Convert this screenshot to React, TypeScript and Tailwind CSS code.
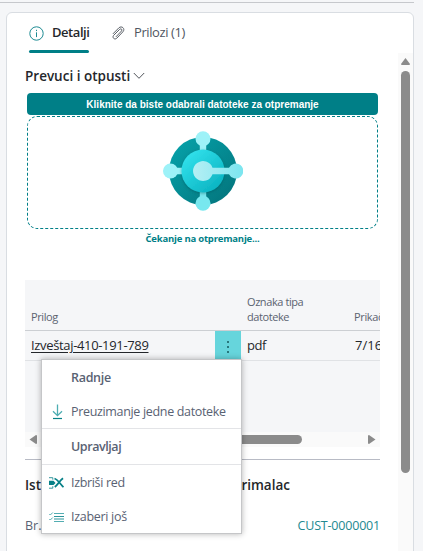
import type { ReactNode } from "react";

const ui = "font-['Open_Sans','Noto_Sans',sans-serif]";

function InfoIcon() {
  return (
    <svg className="shrink-0" width="15" height="15" viewBox="0 0 15 15" fill="none" stroke="#1c8a92">
      <circle cx="7.5" cy="7.5" r="6.7" />
      <path d="M7.5 6.3v4.8M7.5 3.8v1.3" />
    </svg>
  );
}

function ClipIcon() {
  return (
    <svg className="shrink-0" width="13" height="14" viewBox="0 0 13 14" fill="none" stroke="#5b6068" strokeWidth="1" strokeLinecap="round">
      <path d="M1.2 7.6 6.8 1.9C9.8-.8 13.6 2.8 10.9 5.8L4.7 12.3C2.5 14.2-.2 11.5 1.6 9.4L7.7 3.3C9.2 2.1 10.6 3.6 9.6 4.9L4.2 10.6" />
    </svg>
  );
}

function Logo() {
  return (
    <svg width="80" height="82" viewBox="0 0 80 82">
      <defs>
        <linearGradient id="ring" x1="0" y1="0" x2="1" y2="1">
          <stop offset="0" stopColor="#06a5ad" />
          <stop offset="1" stopColor="#037179" />
        </linearGradient>
        <linearGradient id="disc" x1="0.15" y1="0.1" x2="0.85" y2="0.9">
          <stop offset="0" stopColor="#31e0eb" />
          <stop offset="1" stopColor="#0bb4c2" />
        </linearGradient>
        <linearGradient id="core" x1="0" y1="0" x2="1" y2="0">
          <stop offset="0" stopColor="#b5eff4" />
          <stop offset="1" stopColor="#7be5ef" />
        </linearGradient>
        <filter id="soft" x="-20%" y="-20%" width="140%" height="140%">
          <feDropShadow dx="0" dy="1" stdDeviation="1.5" floodColor="#004b50" floodOpacity="0.45" />
        </filter>
      </defs>
      <circle cx="40" cy="41" r="34" fill="url(#ring)" />
      <g fill="#9df2f8">
        <path d="M36.8 8h6.4v14h-6.4zM8 37.800h14v6.400H8z" />
        <circle cx="40" cy="8.800" r="7.500" />
        <circle cx="7.500" cy="41" r="7.500" />
      </g>
      <g fill="#78e8ef">
        <path d="M36.800 60h6.400v14h-6.400z" />
        <circle cx="40" cy="73.200" r="7.500" />
      </g>
      <circle cx="40" cy="41" r="21.500" fill="url(#disc)" filter="url(#soft)" />
      <path d="M49.500 44.200H66a7.500 7.500 0 1 0 0-6.400H49.500A10 10 0 1 0 49.500 44.200Z" fill="url(#core)" />
    </svg>
  );
}

function DownloadIcon() {
  return (
    <svg width="11" height="16" viewBox="0 0 11 16" fill="none">
      <path d="M5.500 .5v11M1 7.200l4.500 4.500L10 7.200" stroke="#4dadb2" strokeWidth="1.300" />
      <path d="M1 14.500h9" stroke="#078087" strokeWidth="1.200" />
    </svg>
  );
}

function DeleteRowIcon() {
  return (
    <svg width="15" height="12" viewBox="0 0 15 12" fill="none">
      <path d="M0 .7h3.800v2M0 11.200h3.800v-2" stroke="#35979d" />
      <path d="M0 3.800h4.500L6.500 6 4.500 8H0z" fill="#078087" />
      <path d="M5.500 1.500c3 1 5.500 5 9 8.700M5.800 10C8.800 7.500 10.500 4 14 1.300" stroke="#078087" strokeWidth="1.800" />
    </svg>
  );
}

function ChecklistIcon() {
  return (
    <svg width="15" height="11" viewBox="0 0 15 11" fill="none" stroke="#53adb2">
      <path d="M5 1.500h10M5 9.500h10" />
      <path d="M5 4.500h10M5 7h10" stroke="#2d959b" />
      <path d="m.3 2 1 1L3.800.5M.3 7l1 1 2.500-2.500" />
    </svg>
  );
}

function MenuItem({ icon, children }: { icon: ReactNode; children: ReactNode }) {
  return (
    <div className="flex h-[34px] items-center text-[12.5px] text-[#596273]">
      <div className="flex w-[29px] items-center pl-[7px]">{icon}</div>
      <span className="whitespace-nowrap">{children}</span>
    </div>
  );
}

function ContextMenu() {
  return (
    <div className="absolute left-[41px] top-[359px] h-[175px] w-[201px] border border-[#c5c6c8] bg-white shadow-[0_0_6px_rgba(0,0,0,0.3)]">
      <div className="flex h-[35px] items-center pl-[29px] pt-[1px] text-[12.5px] font-semibold text-[#596273]"><span className="tracking-[-0.3px]">Radnje</span></div>
      <MenuItem icon={<span className="ml-[3px]"><DownloadIcon /></span>}><span className="tracking-[-0.33px]">Preuzimanje jedne datoteke</span></MenuItem>
      <div className="mt-[-1px] flex h-[37px] items-center border-y border-[#e3e4e7] pl-[29px] pt-[1px] text-[12.5px] font-semibold text-[#596273]"><span className="tracking-[-0.43px]">Upravljaj</span></div>
      <div className="pt-[1px]">
        <MenuItem icon={<DeleteRowIcon />}><span className="tracking-[-0.33px]">Izbriši red</span></MenuItem>
        <MenuItem icon={<ChecklistIcon />}><span className="tracking-[-0.3px]">Izaberi još</span></MenuItem>
      </div>
    </div>
  );
}

function AttachmentTable() {
  return (
    <div className="mt-[34px] w-[355px] overflow-hidden bg-[#f5f6f8]">
      <div className="flex h-[51px] items-end border-b border-[#cccfd3] pb-[6px] text-[11px] leading-[15px] text-[#5b6370]">
        <div className="w-[222px] shrink-0 pl-[6px]"><span className="tracking-[-0.4px]">Prilog</span></div>
        <div className="w-[107px] shrink-0 tracking-[-0.42px]">Oznaka tipa<br />datoteke</div>
        <div className="whitespace-nowrap tracking-[-0.35px]">Prikačeno</div>
      </div>
      <div className="flex h-[30px] items-center border-b border-[#e0e2e5] text-[13px] text-[#24272b]">
        <div className="w-[190px] shrink-0 pl-[6px]">
          <span className="tracking-[-0.34px] underline underline-offset-2">Izveštaj-410-191-789</span>
        </div>
        <div className="flex h-[29px] w-[26px] shrink-0 flex-col items-center justify-center gap-[3px] bg-[#66d5dc] pt-[2px]">
          <i className="size-[2px] bg-[#28777c]" />
          <i className="size-[2px] bg-[#28777c]" />
          <i className="size-[2px] bg-[#28777c]" />
        </div>
        <div className="w-[114px] shrink-0 pl-[6px] tracking-[-0.4px]">pdf</div>
        <div className="whitespace-nowrap">7/16</div>
      </div>
      <div className="h-[71px]" />
      <div className="flex h-[15px] items-center bg-[#fafafa] pl-[4px]">
        <svg width="8" height="9" viewBox="0 0 8 9" fill="#8b8b8b"><path d="M7 0 .5 4.500 7 9q1 0 1-1V1Q8 0 7 0Z" /></svg>
        <div className="ml-[4px] h-[9px] w-[261px] rounded-full bg-[#8b8b8b]" />
        <svg className="ml-[66px]" width="8" height="9" viewBox="0 0 8 9" fill="#8b8b8b"><path d="m1 0 6.500 4.500L1 9Q0 9 0 8V1q0-1 1-1Z" /></svg>
      </div>
    </div>
  );
}

export default function App() {
  return (
    <div className={`relative h-[551px] w-[423px] overflow-hidden bg-[#f5f6f8] pt-[2px] ${ui}`}>
      <div className="h-px w-[414px] bg-[#c6c8cc]" />
      <div className="ml-[6px] mt-[9px] h-[560px] w-[408px] rounded-[6px] border border-[#d9dde2] bg-white">
        <div className="flex h-[40px] items-start pl-[22px]">
          <div className="flex h-[40px] w-[60px] flex-col justify-between">
            <div className="flex h-[35px] items-center pt-[5px] text-[13px] font-semibold text-[#24272b]">
              <InfoIcon />
              <span className="ml-[8px] tracking-[-0.45px]">Detalji</span>
            </div>
            <div className="h-[3px] shrink-0 rounded-full bg-[#007f87]" />
          </div>
          <div className="ml-[23px] flex h-[35px] items-center pt-[5px] text-[13px] text-[#505661]">
            <ClipIcon />
            <span className="ml-[9px] whitespace-nowrap tracking-[-0.4px]">Prilozi (1)</span>
          </div>
        </div>
        <div className="flex">
          <div className="h-[500px] w-[391px] pl-[18px]">
            <div className="flex h-[40px] items-center pt-[6px] text-[13.5px] font-semibold text-[#24272b]">
              <span className="whitespace-nowrap">Prevuci i otpusti</span>
              <svg className="ml-[3px]" width="12" height="8" viewBox="0 0 12 8" fill="none" stroke="#50545a"><path d="m.8 1 5.200 5.300L11.200 1" /></svg>
            </div>
            <div className="ml-[2px] flex h-[22px] w-[351px] items-center justify-center rounded-[4px] bg-[#007f87] font-['Liberation_Sans',sans-serif] text-[10px] font-bold text-white">
              <span className="whitespace-nowrap">Kliknite da biste odabrali datoteke za otpremanje</span>
            </div>
            <div className="ml-[2px] mt-[1px] flex h-[113px] w-[351px] justify-center rounded-[10px] border border-dashed border-[#007f87] pt-[13px]">
              <Logo />
            </div>
            <div className="ml-[2px] flex h-[17px] w-[351px] items-center justify-center pt-[3px] text-[9.5px] font-bold text-[#007f87]">
              <span className="whitespace-nowrap tracking-[-0.2px]">Čekanje na otpremanje...</span>
            </div>
            <AttachmentTable />
            <div className="mt-[12px] h-px w-[355px] bg-[#b8bbc5]" />
            <div className="flex h-[50px] w-[355px] items-center justify-between pr-[90px] text-[13.5px] font-semibold text-[#24272b]">
              <span>Istorija</span>
              <span>primalac</span>
            </div>
            <div className="flex h-[32px] w-[355px] items-center justify-between text-[12.5px] text-[#596273]">
              <span>Br.</span>
              <span className="tracking-[-0.2px] text-[#238990]">CUST-0000001</span>
            </div>
          </div>
          <div className="flex h-[500px] w-[15px] flex-col items-center bg-[#fafafa] pt-[5px]">
            <svg width="9" height="7" viewBox="0 0 9 7" fill="#8b8b8b"><path d="M4.500 0 9 6q0 1-1 1H1Q0 7 0 6Z" /></svg>
            <div className="mt-[6px] h-[402px] w-[9px] rounded-full bg-[#8b8b8b]" />
          </div>
        </div>
      </div>
      <ContextMenu />
    </div>
  );
}
